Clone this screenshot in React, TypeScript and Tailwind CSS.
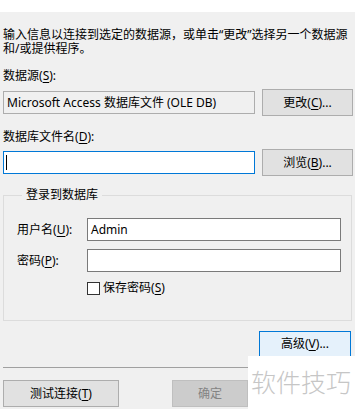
import React from 'react';

const FONT = { fontFamily: '"Noto Sans", "Noto Sans CJK SC", sans-serif' };

const Key: React.FC<{ k: string }> = ({ k }) => (
  <>
    (<span className="underline underline-offset-2">{k}</span>)
  </>
);

const WinButton: React.FC<{
  children: React.ReactNode;
  className?: string;
  variant?: 'normal' | 'focus' | 'disabled';
}> = ({ children, className = '', variant = 'normal' }) => {
  const look =
    variant === 'focus'
      ? 'bg-[#e5f1fb] border-[#0078d7] text-black'
      : variant === 'disabled'
      ? 'bg-[#cccccc] border-[#bfbfbf] text-[#838383]'
      : 'bg-[#e1e1e1] border-[#adadad] text-black';
  return (
    <div className={`flex items-center justify-center border leading-[14px] ${look} ${className}`}>
      {children}
    </div>
  );
};

const App: React.FC = () => {
  return (
    <div
      className="relative w-[355px] h-[409px] overflow-hidden bg-[#f0f0f0] text-[12px] text-black"
      style={FONT}
    >
      <div className="h-[12px] bg-white" />

      <div className="pl-[3px] pr-[2px]">
        <p className="mt-[16px] leading-[14px]">
          输入信息以连接到选定的数据源，或单击“更改”选择另一个数据源和/或提供程序。
        </p>

        <div className="mt-[13px] leading-[14px]">
          数据源<Key k="S" />:
        </div>
        <div className="mt-[6px] flex items-center gap-[7px]">
          <div className="h-[23px] w-[252px] border border-[#adadad] bg-[#f0f0f0] px-[3px] flex items-center leading-[14px] whitespace-nowrap">
            Microsoft Access 数据库文件 (OLE DB)
          </div>
          <WinButton className="h-[27px] w-[91px]">
            更改<Key k="C" />...
          </WinButton>
        </div>

        <div className="mt-[14px] leading-[14px]">
          数据库文件名<Key k="D" />:
        </div>
        <div className="mt-[5px] flex items-center gap-[7px]">
          <div className="h-[23px] w-[252px] border border-[#0078d7] bg-white flex items-center pl-[2px]">
            <div className="h-[15px] w-px bg-black" />
          </div>
          <WinButton className="h-[27px] w-[91px]">
            浏览<Key k="B" />...
          </WinButton>
        </div>

        <fieldset className="mt-[12px] mr-[1px] border border-[#dcdcdc] pl-[13px] pr-[10px] pb-[25px]">
          <legend className="ml-[5px] px-[4px] leading-[14px]">登录到数据库</legend>
          <div className="mt-[16px] flex items-center">
            <span className="w-[70px] leading-[14px]">
              用户名<Key k="U" />:
            </span>
            <div className="h-[23px] flex-1 border border-[#7a7a7a] bg-white px-[3px] flex items-center leading-[14px]">
              Admin
            </div>
          </div>
          <div className="mt-[8px] flex items-center">
            <span className="w-[70px] leading-[14px]">
              密码<Key k="P" />:
            </span>
            <div className="h-[23px] flex-1 border border-[#7a7a7a] bg-white" />
          </div>
          <div className="mt-[9px] ml-[70px] flex items-center gap-[3px] leading-[14px]">
            <div className="h-[13px] w-[13px] border border-[#333333] bg-white" />
            <span>
              保存密码<Key k="S" />
            </span>
          </div>
        </fieldset>

        <div className="mt-[10px] flex justify-end">
          <WinButton variant="focus" className="mr-[2px] h-[26px] w-[92px]">
            高级<Key k="V" />...
          </WinButton>
        </div>

        <div className="mt-[10px] border-t border-[#a0a0a0]" />

        <div className="mt-[12px] flex items-center">
          <WinButton className="h-[27px] w-[116px]">
            测试连接<Key k="T" />
          </WinButton>
          <WinButton variant="disabled" className="ml-[53px] h-[27px] w-[76px]">
            确定
          </WinButton>
        </div>
      </div>

      <div className="absolute left-[248px] top-[356px] right-0 bottom-0 bg-white flex items-center pl-[3px]">
        <span className="whitespace-nowrap text-[25px] leading-none text-[#c6c6c6] font-light">软件技巧</span>
      </div>
    </div>
  );
};

export default App;
